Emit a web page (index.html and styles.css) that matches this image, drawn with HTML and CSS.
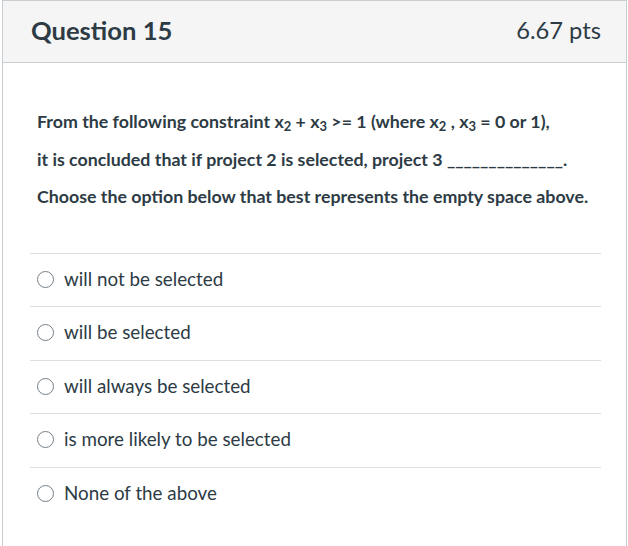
FILE: index.html
```html
<!DOCTYPE html>
<html>
<head>
<meta charset="utf-8">
<link rel="stylesheet" href="styles.css">
</head>
<body>
<div class="card">
  <div class="header">
    <h2 class="title">Question 15</h2>
    <div class="pts">6.67 pts</div>
  </div>
  <div class="body">
    <div class="text">
      <p>From the following constraint <span class="v">x<sub>2</sub></span> + <span class="v">x<sub>3</sub></span> &gt;= 1 (where <span class="v">x<sub>2</sub></span> , <span class="v">x<sub>3</sub></span> = 0 or 1),</p>
      <p>it is concluded that if project 2 is selected, project 3 <span class="blank">______________</span>.</p>
      <p>Choose the option below that best represents the empty space above.</p>
    </div>
    <div class="answers">
      <label class="answer"><span class="radio"></span>will not be selected</label>
      <label class="answer"><span class="radio"></span>will be selected</label>
      <label class="answer"><span class="radio"></span>will always be selected</label>
      <label class="answer"><span class="radio"></span>is more likely to be selected</label>
      <label class="answer"><span class="radio"></span>None of the above</label>
    </div>
  </div>
</div>
</body>
</html>
```
FILE: styles.css
```css
html, body {
  margin: 0;
  padding: 0;
  background: #fff;
}
body {
  font-family: Lato, "Open Sans", sans-serif;
  color: #2d3b45;
}
.card {
  margin-left: 2px;
  width: 623px;
  border: 1px solid #c7cdd1;
  border-bottom: none;
  height: 560px;
}
.header {
  display: flex;
  justify-content: space-between;
  align-items: center;
  height: 57px;
  padding: 0 25px 4px 28px;
  background: #f5f5f5;
  border-bottom: 1px solid #c7cdd1;
}
.title {
  margin: 0;
  font-size: 25.6px;
  font-weight: 700;
}
.pts {
  font-size: 23.7px;
  font-weight: 400;
}
.body {
  padding: 40px 25px 0 27px;
}
.text {
  padding-left: 7px;
}
.text p {
  margin: 0;
  font-size: 17.8px;
  font-weight: 700;
  line-height: 37.5px;
  white-space: nowrap;
}
.v sub {
  font-size: 13px;
  vertical-align: -3px;
  line-height: 0;
}
.answers {
  margin-top: 37px;
}
.answer {
  display: flex;
  align-items: center;
  height: 53.5px;
  border-top: 1px solid #dcdfe2;
  padding: 0 0 3px 7px;
  font-size: 18.8px;
  font-weight: 400;
  box-sizing: border-box;
}
.radio {
  width: 15px;
  height: 15px;
  border: 1.5px solid #757f87;
  border-radius: 50%;
  margin: 2px 10px 0 0;
  flex: none;
}
```
